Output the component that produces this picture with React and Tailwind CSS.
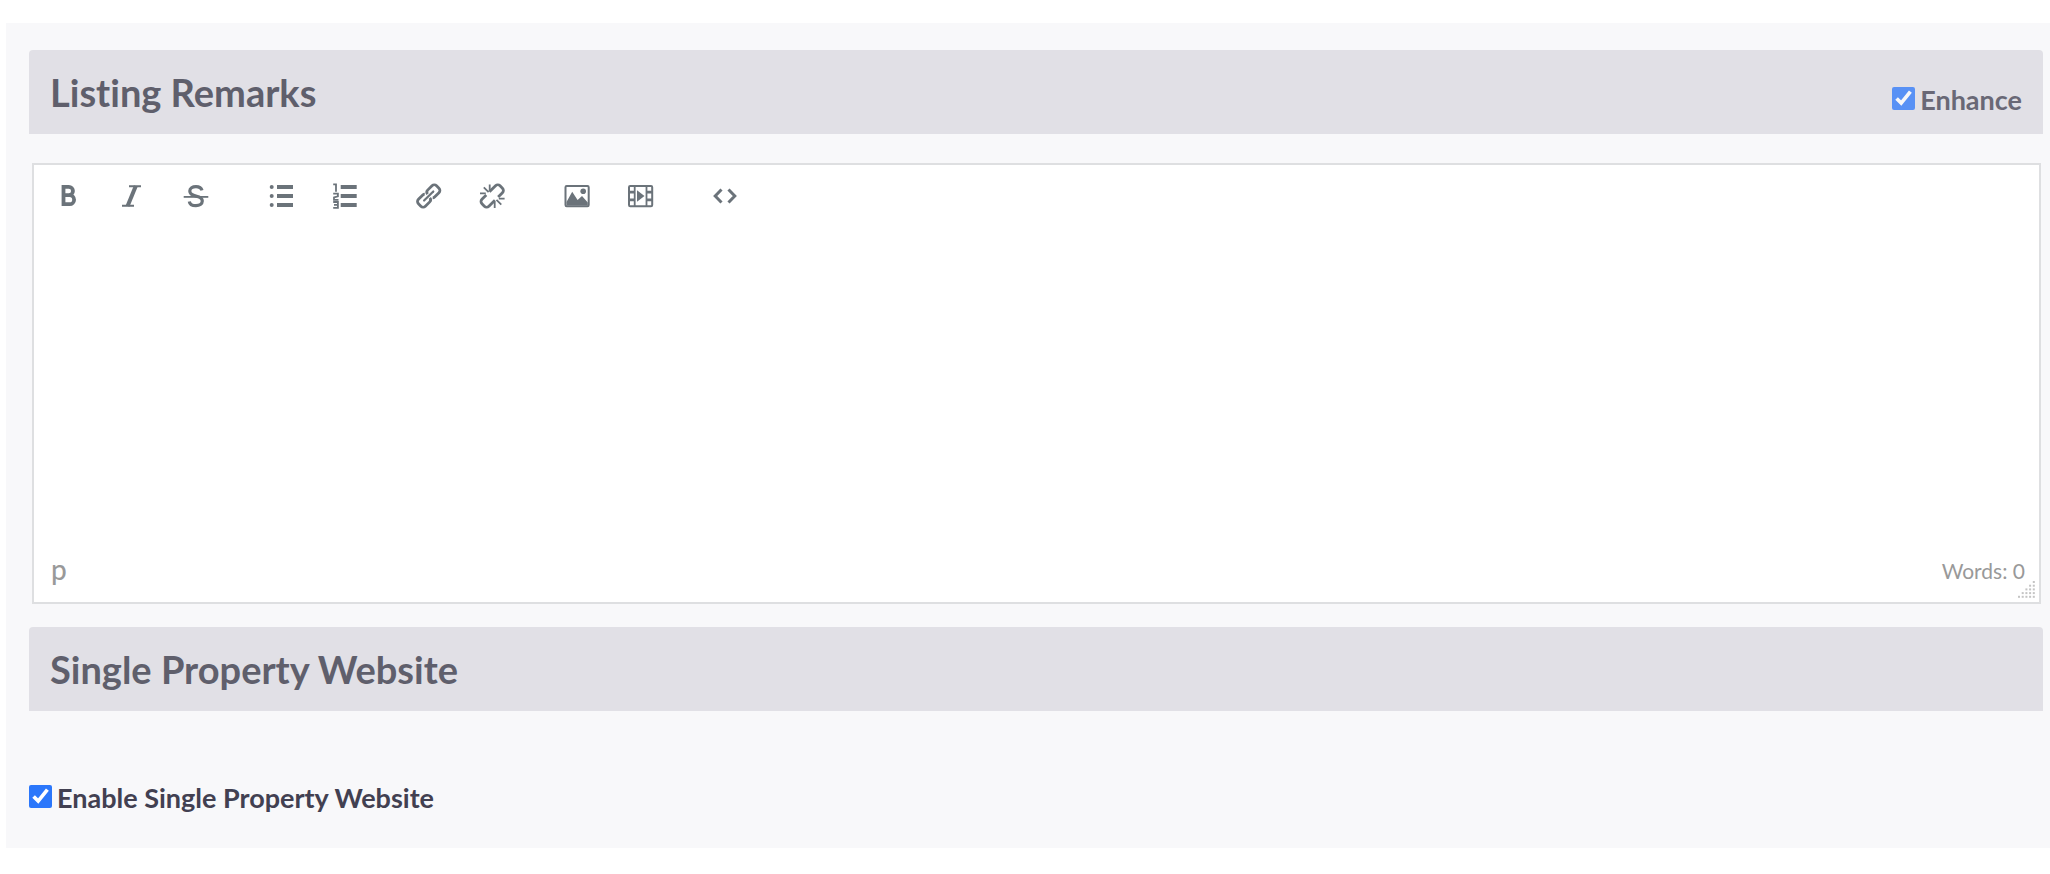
import { useState } from "react";

const Icon = ({ children }) => (
  <svg
    width="25"
    height="25"
    viewBox="0 0 25 25"
    fill="none"
    stroke="currentColor"
    className="overflow-visible"
    aria-hidden="true"
  >
    {children}
  </svg>
);

const BoldIcon = () => (
  <Icon>
    <path
      strokeWidth="3.8"
      d="M6.5 2.9H11.8a4.1 4.1 0 0 1 0 8.3H6.5M11.8 11.2h.8a4.5 4.5 0 0 1 0 9H6.5M6.5 1v21.1"
    />
  </Icon>
);

const ItalicIcon = () => (
  <Icon>
    <path strokeWidth="2" d="M9 2.2h12M2 21.8h12" />
    <path strokeWidth="4" d="M15.8 2 7.6 22" />
  </Icon>
);

const StrikeIcon = () => (
  <Icon>
    <path strokeWidth="1.8" d="M.7 12.9h24.6" />
    <path
      strokeWidth="3.2"
      d="M19 6.4C18.3 4 16 2.7 13 2.7c-3.6 0-6.2 1.7-6.2 4.4 0 3.4 3.2 4.4 6.2 5 3.5.7 6.3 1.8 6.3 5 0 2.9-2.8 4.5-6.3 4.5-3.5 0-6.3-1.5-6.7-4.2"
    />
  </Icon>
);

const BulletListIcon = () => (
  <Icon>
    <path strokeWidth="4" d="M9 3h16M9 12h16M9 21h16" />
    <g fill="currentColor" stroke="none">
      <circle cx="3.7" cy="3" r="2" />
      <circle cx="3.7" cy="12" r="2" />
      <circle cx="3.7" cy="21" r="2" />
    </g>
  </Icon>
);

const NumberListIcon = () => (
  <Icon>
    <path strokeWidth="4" d="M9.7 3h16M9.7 12h16M9.7 21h16" />
    <path strokeWidth="1.8" d="M2.2.4h2.8v7.4" />
    <path strokeWidth="1.8" d="M2.2 9.6h4.7v2.7L3 13.5v2.3h4.5" />
    <path strokeWidth="1.8" d="M2.2 18h4.7v5.8H2.2M3 20.9h3.9" />
  </Icon>
);

const LinkIcon = () => (
  <Icon>
    <g transform="translate(12.7 12) rotate(-45)" strokeWidth="2.8">
      <path d="M.6-2.2C.8-4 1.8-4.9 3.400-4.900H9.600a3.200 3.200 0 0 1 3.200 3.200V1.700a3.200 3.200 0 0 1-3.200 3.200H3.400C2.600 4.900 2 4.600 1.500 4.100" />
      <path d="M-.6 2.200C-.8 4-1.800 4.900-3.400 4.900H-9.600a3.200 3.200 0 0 1-3.200-3.200V-1.700a3.200 3.200 0 0 1 3.200-3.200H-3.400C-2.600-4.900-2-4.600-1.500-4.100" />
      <path strokeWidth="2.2" strokeLinecap="round" d="M-6.500 0h13" />
    </g>
  </Icon>
);

const UnlinkIcon = () => (
  <Icon>
    <g transform="translate(13.2 12) rotate(-45)" strokeWidth="2.8">
      <path d="M1-4.9H9.6a3.2 3.2 0 0 1 3.2 3.2V1.7a3.2 3.2 0 0 1-3.2 3.2H3.500" />
      <path d="M-1 4.9H-9.6a3.2 3.2 0 0 1-3.2-3.2V-1.7a3.2 3.2 0 0 1 3.2-3.2H-3.500" />
    </g>
    <path
      strokeWidth="1.8"
      d="M10.7.6v6M4.8 3.4l4.8 4.8M1 9.4h5.8M15.7 18v6M17.5 15.8l4.8 4.8M19.8 14.6h5.8"
    />
  </Icon>
);

const ImageIcon = () => (
  <Icon>
    <rect x="1.5" y="2" width="23.2" height="20.2" rx="1.2" strokeWidth="2" />
    <g fill="currentColor" stroke="none">
      <circle cx="19.2" cy="7.3" r="2.8" />
      <path d="M2.5 21.5V18L8.2 7.8l5.4 8.2 4.4-4 5.8 6.5v3z" />
    </g>
  </Icon>
);

const VideoIcon = () => (
  <Icon>
    <rect x="2" y="2" width="23.2" height="20.2" rx="1.2" strokeWidth="2" />
    <path strokeWidth="1.8" d="M7.7 2v20M19.5 2v20" />
    <path strokeWidth="2.7" d="M2 8.2h5.5M2 15.8h5.5M19.7 8.2h5.5M19.7 15.8h5.5" />
    <path fill="currentColor" stroke="none" d="M10 6.3v11.4l7.5-5.7z" />
  </Icon>
);

const CodeIcon = () => (
  <Icon>
    <path strokeWidth="3" d="M9.5 5.5 3.2 12l6.3 6.5M16.5 5.5l6.3 6.5-6.3 6.5" />
  </Icon>
);

const toolbarGroups = [
  [
    { label: "Bold", Glyph: BoldIcon },
    { label: "Italic", Glyph: ItalicIcon },
    { label: "Strikethrough", Glyph: StrikeIcon },
  ],
  [
    { label: "Bullet list", Glyph: BulletListIcon },
    { label: "Numbered list", Glyph: NumberListIcon },
  ],
  [
    { label: "Insert link", Glyph: LinkIcon },
    { label: "Remove link", Glyph: UnlinkIcon },
  ],
  [
    { label: "Insert image", Glyph: ImageIcon },
    { label: "Insert video", Glyph: VideoIcon },
  ],
  [{ label: "Source code", Glyph: CodeIcon }],
];

const SectionHeader = ({ title, children }) => (
  <div className="flex min-h-[84px] items-center justify-between rounded-t bg-[#e1e0e6] px-[21px]">
    <h2 className="text-[38px] leading-10 font-bold text-[#5f5f6c] [font-variant-ligatures:none]">
      {title}
    </h2>
    {children}
  </div>
);

const Checkbox = ({ id, label, checked, onChange, className }) => (
  <div className={`flex items-center gap-[5px] text-[27px] leading-8 font-bold text-[#424051] ${className}`}>
    <input
      id={id}
      type="checkbox"
      checked={checked}
      onChange={(e) => onChange(e.target.checked)}
      className="mb-1 size-[23px] accent-[#2b77fb]"
    />
    <label htmlFor={id}>{label}</label>
  </div>
);

const ResizeGrip = () => (
  <svg width="17" height="17" viewBox="0 0 17 17" fill="#c4c4c4" aria-hidden="true">
    {[0, 1, 2, 3, 4].map((row) =>
      [0, 1, 2, 3, 4]
        .filter((col) => col >= 4 - row)
        .map((col) => (
          <rect key={`${row}-${col}`} x={col * 3.7} y={row * 3.7} width="2" height="2" />
        ))
    )}
  </svg>
);

const Editor = () => {
  const [text, setText] = useState("");
  const words = text.trim() ? text.trim().split(/\s+/).length : 0;

  return (
    <div className="mr-[2px] ml-[3px] border-2 border-[#dedfe1] bg-white">
      <div className="flex gap-[22px] px-1 text-[#6b737a]">
        {toolbarGroups.map((group) => (
          <div key={group[0].label} className="flex">
            {group.map(({ label, Glyph }) => (
              <button
                key={label}
                type="button"
                aria-label={label}
                className="flex h-[63px] w-[63px] items-center justify-center"
              >
                <Glyph />
              </button>
            ))}
          </div>
        ))}
      </div>

      <textarea
        aria-label="Listing Remarks"
        value={text}
        onChange={(e) => setText(e.target.value)}
        className="block h-[318px] w-full resize-none px-[18px] text-2xl outline-none"
      />

      <div className="relative flex h-14 items-start justify-between pr-3.5 pl-[17px] text-[#999]">
        <span className="text-[28px] leading-[46px] font-medium">p</span>
        <span className="text-[21px] leading-[50px]">Words: {words}</span>
        <div className="absolute right-1 bottom-1">
          <ResizeGrip />
        </div>
      </div>
    </div>
  );
};

const App = () => {
  const [enhance, setEnhance] = useState(true);
  const [enabled, setEnabled] = useState(true);

  return (
    <main className="bg-white pt-[23px] pl-[6px] font-['Lato',sans-serif]">
      <div className="bg-[#f8f8fa] pt-[27px] pr-[7px] pb-[34px] pl-[23px]">
        <SectionHeader title="Listing Remarks">
          <Checkbox
            id="enhance"
            label="Enhance"
            checked={enhance}
            onChange={setEnhance}
            className="pt-4 opacity-75"
          />
        </SectionHeader>

        <div className="pt-[29px] pb-[23px]">
          <Editor />
        </div>

        <SectionHeader title="Single Property Website" />

        <Checkbox
          id="single-property"
          label="Enable Single Property Website"
          checked={enabled}
          onChange={setEnabled}
          className="pt-[71px]"
        />
      </div>
    </main>
  );
};

export default App;
